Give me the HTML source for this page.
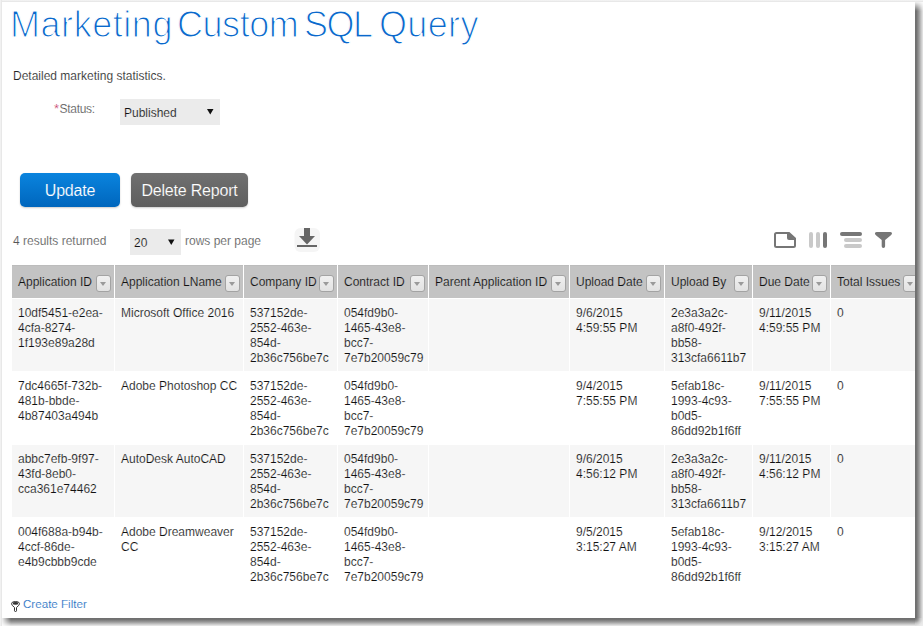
<!DOCTYPE html>
<html><head><meta charset="utf-8">
<style>
html,body{margin:0;padding:0;}
body{width:923px;height:626px;position:relative;overflow:hidden;background:#fff;font-family:"Liberation Sans",sans-serif;}
.a{position:absolute;white-space:nowrap;}
.fr-t{position:absolute;left:0;top:0;width:923px;height:2px;background:linear-gradient(#f6f6f6,#e3e3e3);}
.fr-l{position:absolute;left:0;top:0;width:2px;height:626px;background:linear-gradient(to right,#f6f6f6,#e3e3e3);}
.sh-r{position:absolute;left:915px;top:2px;width:8px;height:616px;background:linear-gradient(to right,#6e6e6e 0px,#737373 1.5px,#9a9a9a 4px,#c4c4c4 6px,#e8e8e8 8px);-webkit-mask-image:linear-gradient(to bottom,rgba(0,0,0,0.1) 0px,#000 9px);}
.sh-b{position:absolute;left:2px;top:618px;width:913px;height:8px;background:linear-gradient(#6e6e6e 0px,#737373 1.5px,#9a9a9a 4px,#c4c4c4 6px,#ececec 8px);-webkit-mask-image:linear-gradient(to right,rgba(0,0,0,0.1) 0px,#000 9px);}
.sh-c{position:absolute;left:915px;top:618px;width:8px;height:8px;background:radial-gradient(circle at 0 0,#6e6e6e 0px,#7a7a7a 1.5px,#9c9c9c 3.5px,#c8c8c8 5.5px,#e6e6e6 8px,#eeeeee 11px);}
.title{left:10px;top:5px;font-size:36px;letter-spacing:-0.55px;line-height:40px;color:#0a68cc;-webkit-text-stroke:1.2px #fff;}
.t{font-size:12px;line-height:15px;-webkit-text-stroke:0.15px #fff;}
.sel{position:absolute;background:#ebebeb;}
.btn{position:absolute;top:173px;height:34px;border-radius:5px;color:#fff;font-size:16px;letter-spacing:-0.2px;line-height:36px;text-align:center;box-shadow:0 1px 2px rgba(0,0,0,0.2);}
.upd{left:20px;width:100px;background:linear-gradient(#0a84de,#0066bd);-webkit-text-stroke:0.15px #0a76cf;}
.del{left:131px;width:117px;background:linear-gradient(#707070,#5e5e5e);-webkit-text-stroke:0.15px #676767;}
.hc{position:absolute;background:#c3c3c3;box-shadow:inset 0 1px #bcbcbc;}
.gc{position:absolute;background:#f6f6f6;}
.ht{position:absolute;white-space:nowrap;font-size:12px;line-height:15px;color:#111;-webkit-text-stroke:0.15px #c4c4c4;}
.ct{position:absolute;white-space:nowrap;font-size:12px;line-height:15px;color:#111;-webkit-text-stroke:0.15px #fff;}
.ct.g{-webkit-text-stroke:0.15px #f6f6f6;}
.dd{position:absolute;width:13px;height:15px;border:1px solid #a3a3a3;border-radius:3px;background:linear-gradient(#f0f0f0,#e2e2e2);}
.dd:after{content:"";position:absolute;left:2.5px;top:6px;border-left:3.75px solid transparent;border-right:3.75px solid transparent;border-top:4px solid #9a9a9a;}
svg{position:absolute;left:0;top:0;}
</style></head><body>
<div class="a title" style="left:10px;letter-spacing:0.55px">Marketing</div><div class="a title" style="left:177px;letter-spacing:-0.45px">Custom</div><div class="a title" style="left:304px;letter-spacing:-1.5px">SQL</div><div class="a title" style="left:379px;letter-spacing:0.35px">Query</div>
<div class="a t" style="left:13px;top:69px;color:#222;">Detailed marketing statistics.</div>
<div class="a t" style="left:54px;top:101px;color:#555;"><span style="color:#c23060;font-size:13px;margin-right:0.5px;">*</span><span style="letter-spacing:-0.3px">Status:</span></div>
<div class="sel" style="left:120px;top:99px;width:100px;height:26px;"></div>
<div class="a t" style="left:124px;top:106px;color:#111;-webkit-text-stroke:0.15px #ebebeb;">Published</div>

<div class="btn upd">Update</div>
<div class="btn del">Delete Report</div>

<div class="a t" style="left:13px;top:234px;color:#555;">4 results returned</div>
<div class="sel" style="left:130px;top:229px;width:51px;height:26px;"></div>
<div class="a t" style="left:134px;top:236px;color:#111;-webkit-text-stroke:0.15px #ebebeb;">20</div>
<div class="a t" style="left:185px;top:234px;color:#555;">rows per page</div>

<div class="hc" style="left:12px;top:265px;width:102px;height:33px"></div>
<div class="ht" style="left:18px;top:275px">Application ID</div>
<div class="dd" style="left:96px;top:275px"></div>
<div class="hc" style="left:115px;top:265px;width:128px;height:33px"></div>
<div class="ht" style="left:121px;top:275px">Application LName</div>
<div class="dd" style="left:225px;top:275px"></div>
<div class="hc" style="left:244px;top:265px;width:93px;height:33px"></div>
<div class="ht" style="left:250px;top:275px">Company ID</div>
<div class="dd" style="left:319px;top:275px"></div>
<div class="hc" style="left:338px;top:265px;width:90px;height:33px"></div>
<div class="ht" style="left:344px;top:275px">Contract ID</div>
<div class="dd" style="left:410px;top:275px"></div>
<div class="hc" style="left:429px;top:265px;width:140px;height:33px"></div>
<div class="ht" style="left:435px;top:275px">Parent Application ID</div>
<div class="dd" style="left:551px;top:275px"></div>
<div class="hc" style="left:570px;top:265px;width:94px;height:33px"></div>
<div class="ht" style="left:576px;top:275px">Upload Date</div>
<div class="dd" style="left:646px;top:275px"></div>
<div class="hc" style="left:665px;top:265px;width:87px;height:33px"></div>
<div class="ht" style="left:671px;top:275px">Upload By</div>
<div class="dd" style="left:734px;top:275px"></div>
<div class="hc" style="left:753px;top:265px;width:77px;height:33px"></div>
<div class="ht" style="left:759px;top:275px">Due Date</div>
<div class="dd" style="left:812px;top:275px"></div>
<div class="hc" style="left:831px;top:265px;width:90px;height:33px"></div>
<div class="ht" style="left:837px;top:275px">Total Issues</div>
<div class="dd" style="left:903px;top:275px"></div>
<div class="gc" style="left:12px;top:299px;width:102px;height:72px"></div>
<div class="ct g" style="left:18px;top:306px">10df5451-e2ea-<br>4cfa-8274-<br>1f193e89a28d</div>
<div class="gc" style="left:115px;top:299px;width:128px;height:72px"></div>
<div class="ct g" style="left:121px;top:306px">Microsoft Office 2016</div>
<div class="gc" style="left:244px;top:299px;width:93px;height:72px"></div>
<div class="ct g" style="left:250px;top:306px">537152de-<br>2552-463e-<br>854d-<br>2b36c756be7c</div>
<div class="gc" style="left:338px;top:299px;width:90px;height:72px"></div>
<div class="ct g" style="left:344px;top:306px">054fd9b0-<br>1465-43e8-<br>bcc7-<br>7e7b20059c79</div>
<div class="gc" style="left:429px;top:299px;width:140px;height:72px"></div>
<div class="gc" style="left:570px;top:299px;width:94px;height:72px"></div>
<div class="ct g" style="left:576px;top:306px">9/6/2015<br>4:59:55 PM</div>
<div class="gc" style="left:665px;top:299px;width:87px;height:72px"></div>
<div class="ct g" style="left:671px;top:306px">2e3a3a2c-<br>a8f0-492f-<br>bb58-<br>313cfa6611b7</div>
<div class="gc" style="left:753px;top:299px;width:77px;height:72px"></div>
<div class="ct g" style="left:759px;top:306px">9/11/2015<br>4:59:55 PM</div>
<div class="gc" style="left:831px;top:299px;width:90px;height:72px"></div>
<div class="ct g" style="left:837px;top:306px">0</div>
<div class="ct" style="left:18px;top:379px">7dc4665f-732b-<br>481b-bbde-<br>4b87403a494b</div>
<div class="ct" style="left:121px;top:379px">Adobe Photoshop CC</div>
<div class="ct" style="left:250px;top:379px">537152de-<br>2552-463e-<br>854d-<br>2b36c756be7c</div>
<div class="ct" style="left:344px;top:379px">054fd9b0-<br>1465-43e8-<br>bcc7-<br>7e7b20059c79</div>
<div class="ct" style="left:576px;top:379px">9/4/2015<br>7:55:55 PM</div>
<div class="ct" style="left:671px;top:379px">5efab18c-<br>1993-4c93-<br>b0d5-<br>86dd92b1f6ff</div>
<div class="ct" style="left:759px;top:379px">9/11/2015<br>7:55:55 PM</div>
<div class="ct" style="left:837px;top:379px">0</div>
<div class="gc" style="left:12px;top:445px;width:102px;height:72px"></div>
<div class="ct g" style="left:18px;top:452px">abbc7efb-9f97-<br>43fd-8eb0-<br>cca361e74462</div>
<div class="gc" style="left:115px;top:445px;width:128px;height:72px"></div>
<div class="ct g" style="left:121px;top:452px">AutoDesk AutoCAD</div>
<div class="gc" style="left:244px;top:445px;width:93px;height:72px"></div>
<div class="ct g" style="left:250px;top:452px">537152de-<br>2552-463e-<br>854d-<br>2b36c756be7c</div>
<div class="gc" style="left:338px;top:445px;width:90px;height:72px"></div>
<div class="ct g" style="left:344px;top:452px">054fd9b0-<br>1465-43e8-<br>bcc7-<br>7e7b20059c79</div>
<div class="gc" style="left:429px;top:445px;width:140px;height:72px"></div>
<div class="gc" style="left:570px;top:445px;width:94px;height:72px"></div>
<div class="ct g" style="left:576px;top:452px">9/6/2015<br>4:56:12 PM</div>
<div class="gc" style="left:665px;top:445px;width:87px;height:72px"></div>
<div class="ct g" style="left:671px;top:452px">2e3a3a2c-<br>a8f0-492f-<br>bb58-<br>313cfa6611b7</div>
<div class="gc" style="left:753px;top:445px;width:77px;height:72px"></div>
<div class="ct g" style="left:759px;top:452px">9/11/2015<br>4:56:12 PM</div>
<div class="gc" style="left:831px;top:445px;width:90px;height:72px"></div>
<div class="ct g" style="left:837px;top:452px">0</div>
<div class="ct" style="left:18px;top:525px">004f688a-b94b-<br>4ccf-86de-<br>e4b9cbbb9cde</div>
<div class="ct" style="left:121px;top:525px">Adobe Dreamweaver<br>CC</div>
<div class="ct" style="left:250px;top:525px">537152de-<br>2552-463e-<br>854d-<br>2b36c756be7c</div>
<div class="ct" style="left:344px;top:525px">054fd9b0-<br>1465-43e8-<br>bcc7-<br>7e7b20059c79</div>
<div class="ct" style="left:576px;top:525px">9/5/2015<br>3:15:27 AM</div>
<div class="ct" style="left:671px;top:525px">5efab18c-<br>1993-4c93-<br>b0d5-<br>86dd92b1f6ff</div>
<div class="ct" style="left:759px;top:525px">9/12/2015<br>3:15:27 AM</div>
<div class="ct" style="left:837px;top:525px">0</div>

<div class="a t" style="left:23px;top:596px;color:#1a6ec2;font-size:11.6px;">Create Filter</div>

<svg width="923" height="626" viewBox="0 0 923 626">
  <!-- select arrows -->
  <path d="M207,109 H213.5 L210.25,114.5 Z" fill="#111"/>
  <path d="M168,239.5 H174.5 L171.25,245 Z" fill="#111"/>
  <!-- download -->
  <rect x="294.5" y="228" width="25.5" height="24" rx="6" fill="#f5f5f5"/>
  <rect x="304" y="228" width="6" height="9" fill="#666"/>
  <path d="M299,236 H315 L307,244.5 Z" fill="#666"/>
  <rect x="297" y="245" width="20" height="2" fill="#666"/>
  <!-- doc -->
  <path d="M775,234.5 Q775,233 776.5,233 H789 L795,238.5 V245.5 Q795,247 793.5,247 H776.5 Q775,247 775,245.5 Z" fill="none" stroke="#767676" stroke-width="2"/>
  <path d="M787,233 V238 Q787,240 789,240 H795.5 L789,233 Z" fill="#767676"/>
  <!-- columns -->
  <rect x="809" y="232" width="4" height="16" rx="2" fill="#c9c9c9"/>
  <rect x="816" y="232" width="4" height="16" rx="2" fill="#c9c9c9"/>
  <rect x="823" y="232" width="4" height="16" rx="2" fill="#767676"/>
  <!-- lines -->
  <rect x="840" y="232" width="22" height="4" rx="2" fill="#767676"/>
  <rect x="844" y="238" width="18" height="4" rx="2" fill="#c9c9c9"/>
  <rect x="844" y="244" width="18" height="4" rx="2" fill="#c9c9c9"/>
  <!-- filter -->
  <path d="M876.6,232 H890.4 Q892.2,232 892,233.6 Q891.8,234.6 890.6,235.6 L885.1,240 V246.2 Q885.1,247.9 883.4,247.9 Q881.7,247.9 881.7,246.2 V240 L876.2,235.6 Q875,234.6 874.9,233.6 Q874.8,232 876.6,232 Z" fill="#767676"/>
  <!-- small funnel -->
  <path d="M11.5,603.7 Q11.5,601.5 15.5,601.5 Q19.5,601.5 19.5,603.7 Q19.5,605.2 16.5,607.5 V610.8 Q16.5,611.5 15.5,611.5 Q14.5,611.5 14.5,610.8 V607.5 Q11.5,605.2 11.5,603.7 Z" fill="#fff" stroke="#333" stroke-width="1"/>
  <ellipse cx="15.5" cy="603.4" rx="2.8" ry="1.3" fill="#333"/>
</svg>

<div class="fr-t"></div><div class="fr-l"></div>
<div class="sh-r"></div><div class="sh-b"></div><div class="sh-c"></div>
</body></html>
